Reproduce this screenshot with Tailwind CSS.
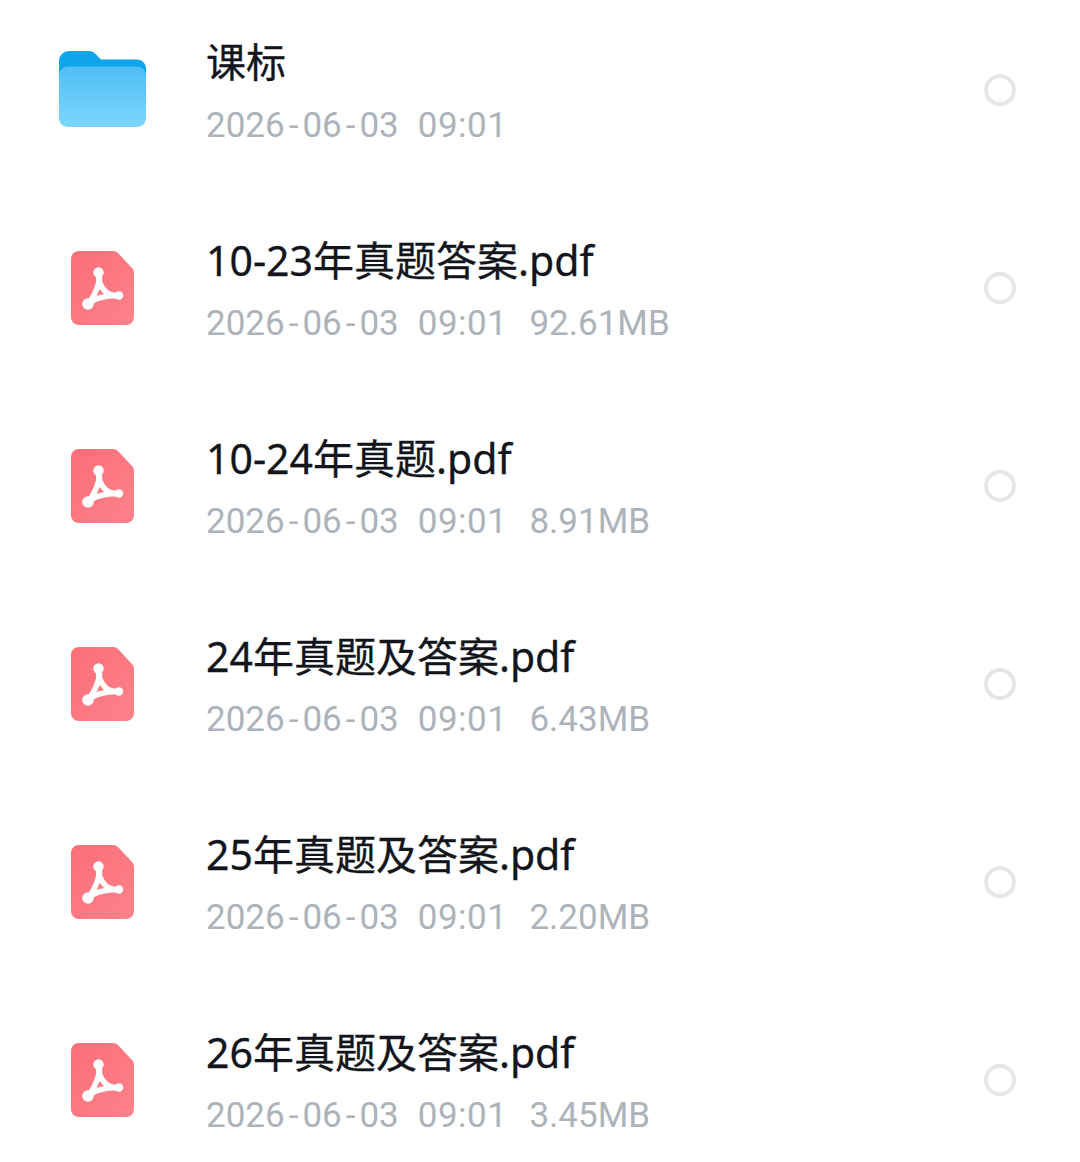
<!DOCTYPE html>
<html lang="zh-CN">
<head>
    <meta charset="UTF-8">
    <meta name="viewport" content="width=device-width, initial-scale=1.0">
    <title>文件列表</title>
    <script src="https://cdn.jsdelivr.net/npm/@tailwindcss/browser@4"></script>
</head>
<body class="bg-white h-[1162px] overflow-hidden font-['Noto_Sans','Noto_Sans_CJK_SC',sans-serif]">

    <svg class="absolute w-0 h-0">
        <defs>
            <linearGradient id="folder-front" x1="0" y1="0" x2="0" y2="1">
                <stop offset="0" stop-color="#4fbef5"/>
                <stop offset="1" stop-color="#7dd6fd"/>
            </linearGradient>
            <linearGradient id="pdf-bg" x1="0" y1="0" x2="1" y2="1">
                <stop offset="0" stop-color="#fb6e78"/>
                <stop offset="1" stop-color="#fd828b"/>
            </linearGradient>
            <symbol id="icon-folder" viewBox="0 0 87 76">
                <path d="M10 0H30C33 0 34.500 1 36.500 3L42 8.500H78C83 8.500 87 12.500 87 17.500V40H0V10C0 4.500 4.500 0 10 0Z" fill="#0ea5ea"/>
                <path d="M9 15.500H78C83 15.500 87 19.500 87 24.500V67C87 72 83 76 78 76H9C4 76 0 72 0 67V24.500C0 19.500 4 15.500 9 15.500Z" fill="url(#folder-front)"/>
            </symbol>
            <symbol id="icon-pdf" viewBox="0 0 63 74">
                <path d="M8 0H42C44 0 45.500 .8 47 2L61 17C62.300 18.400 63 20 63 22V66C63 70.500 59.500 74 55 74H8C3.500 74 0 70.500 0 66V8C0 3.500 3.500 0 8 0Z" fill="url(#pdf-bg)"/>
                <g fill="none" stroke="#fff" stroke-width="5.500" stroke-linecap="round" stroke-linejoin="round">
                    <path d="M28 22C27 30 30 36 34 40C38 44 42 45 48 44.500"/>
                    <path d="M28 22C30 30 26 38 23 44C21 48 18 52 16.500 54"/>
                    <path d="M16.500 54C22 48 32 44.500 48 44.500"/>
                </g>
                <circle cx="27.500" cy="21.500" r="5.200" fill="#fff"/>
                <circle cx="17" cy="53" r="5.800" fill="#fff"/>
                <circle cx="48" cy="44.500" r="4.200" fill="#fff"/>
            </symbol>
        </defs>
    </svg>

    <ul class="flex flex-col gap-[18px]">
        <li class="flex items-center h-[180px]">
            <div class="w-[206px] pl-[59px] shrink-0 -mt-[2px]"><svg class="block w-[87px] h-[76px] blur-[0.5px]"><use href="#icon-folder"/></svg></div>
            <div class="flex-1">
                <p class="text-[40px] [-webkit-text-stroke:0.3px_#12161c] leading-[54px] text-[#12161c] mt-[6px]">课标</p>
                <p class="flex text-[35px] leading-[50px] mt-[12px] text-[#adb3ba] font-['Roboto']">
                    <span class="mr-[19px]">2026<i class="not-italic mx-[4px]">-</i>06<i class="not-italic mx-[4px]">-</i>03</span>
                    <span class="mr-[22px] tracking-[0.5px]">09:01</span>
                </p>
            </div>
            <span class="w-8 h-8 rounded-full border-[4px] border-[#e6e6e6] mr-[64px]"></span>
        </li>
        <li class="flex items-center h-[180px]">
            <div class="w-[206px] pl-[71px] shrink-0"><svg class="block w-[63px] h-[74px] blur-[0.5px]"><use href="#icon-pdf"/></svg></div>
            <div class="flex-1">
                <p class="text-[41px] [-webkit-text-stroke:0.3px_#12161c] leading-[54px] text-[#12161c] mt-[6px]">10-23年真题答案.pdf</p>
                <p class="flex text-[35px] leading-[50px] mt-[12px] text-[#adb3ba] font-['Roboto']">
                    <span class="mr-[19px]">2026<i class="not-italic mx-[4px]">-</i>06<i class="not-italic mx-[4px]">-</i>03</span>
                    <span class="mr-[22px] tracking-[0.5px]">09:01</span>
                    <span>92.61MB</span>
                </p>
            </div>
            <span class="w-8 h-8 rounded-full border-[4px] border-[#e6e6e6] mr-[64px]"></span>
        </li>
        <li class="flex items-center h-[180px]">
            <div class="w-[206px] pl-[71px] shrink-0"><svg class="block w-[63px] h-[74px] blur-[0.5px]"><use href="#icon-pdf"/></svg></div>
            <div class="flex-1">
                <p class="text-[41px] [-webkit-text-stroke:0.3px_#12161c] leading-[54px] text-[#12161c] mt-[6px]">10-24年真题.pdf</p>
                <p class="flex text-[35px] leading-[50px] mt-[12px] text-[#adb3ba] font-['Roboto']">
                    <span class="mr-[19px]">2026<i class="not-italic mx-[4px]">-</i>06<i class="not-italic mx-[4px]">-</i>03</span>
                    <span class="mr-[22px] tracking-[0.5px]">09:01</span>
                    <span>8.91MB</span>
                </p>
            </div>
            <span class="w-8 h-8 rounded-full border-[4px] border-[#e6e6e6] mr-[64px]"></span>
        </li>
        <li class="flex items-center h-[180px]">
            <div class="w-[206px] pl-[71px] shrink-0"><svg class="block w-[63px] h-[74px] blur-[0.5px]"><use href="#icon-pdf"/></svg></div>
            <div class="flex-1">
                <p class="text-[41px] [-webkit-text-stroke:0.3px_#12161c] leading-[54px] text-[#12161c] mt-[6px]">24年真题及答案.pdf</p>
                <p class="flex text-[35px] leading-[50px] mt-[12px] text-[#adb3ba] font-['Roboto']">
                    <span class="mr-[19px]">2026<i class="not-italic mx-[4px]">-</i>06<i class="not-italic mx-[4px]">-</i>03</span>
                    <span class="mr-[22px] tracking-[0.5px]">09:01</span>
                    <span>6.43MB</span>
                </p>
            </div>
            <span class="w-8 h-8 rounded-full border-[4px] border-[#e6e6e6] mr-[64px]"></span>
        </li>
        <li class="flex items-center h-[180px]">
            <div class="w-[206px] pl-[71px] shrink-0"><svg class="block w-[63px] h-[74px] blur-[0.5px]"><use href="#icon-pdf"/></svg></div>
            <div class="flex-1">
                <p class="text-[41px] [-webkit-text-stroke:0.3px_#12161c] leading-[54px] text-[#12161c] mt-[6px]">25年真题及答案.pdf</p>
                <p class="flex text-[35px] leading-[50px] mt-[12px] text-[#adb3ba] font-['Roboto']">
                    <span class="mr-[19px]">2026<i class="not-italic mx-[4px]">-</i>06<i class="not-italic mx-[4px]">-</i>03</span>
                    <span class="mr-[22px] tracking-[0.5px]">09:01</span>
                    <span>2.20MB</span>
                </p>
            </div>
            <span class="w-8 h-8 rounded-full border-[4px] border-[#e6e6e6] mr-[64px]"></span>
        </li>
        <li class="flex items-center h-[180px]">
            <div class="w-[206px] pl-[71px] shrink-0"><svg class="block w-[63px] h-[74px] blur-[0.5px]"><use href="#icon-pdf"/></svg></div>
            <div class="flex-1">
                <p class="text-[41px] [-webkit-text-stroke:0.3px_#12161c] leading-[54px] text-[#12161c] mt-[6px]">26年真题及答案.pdf</p>
                <p class="flex text-[35px] leading-[50px] mt-[12px] text-[#adb3ba] font-['Roboto']">
                    <span class="mr-[19px]">2026<i class="not-italic mx-[4px]">-</i>06<i class="not-italic mx-[4px]">-</i>03</span>
                    <span class="mr-[22px] tracking-[0.5px]">09:01</span>
                    <span>3.45MB</span>
                </p>
            </div>
            <span class="w-8 h-8 rounded-full border-[4px] border-[#e6e6e6] mr-[64px]"></span>
        </li>
    </ul>
</body>
</html>
